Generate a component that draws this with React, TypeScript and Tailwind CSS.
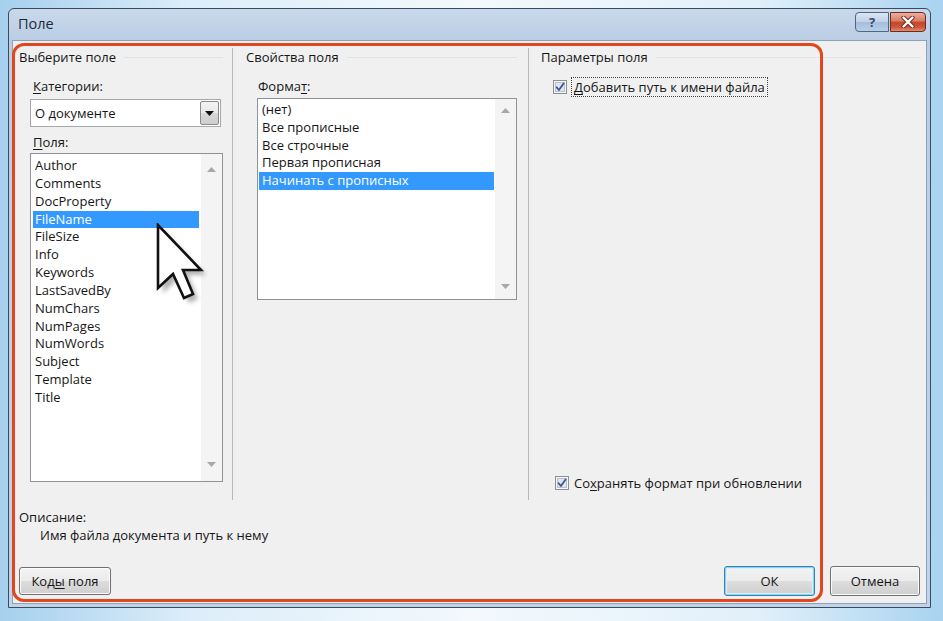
import React from "react";

const fields = [
  "Author",
  "Comments",
  "DocProperty",
  "FileName",
  "FileSize",
  "Info",
  "Keywords",
  "LastSavedBy",
  "NumChars",
  "NumPages",
  "NumWords",
  "Subject",
  "Template",
  "Title",
];

const formats = [
  "(нет)",
  "Все прописные",
  "Все строчные",
  "Первая прописная",
  "Начинать с прописных",
];

function ArrowUp() {
  return (
    <svg width="9" height="5" viewBox="0 0 9 5">
      <path d="M0 5 L4.5 0 L9 5 Z" fill="#a8a8a8" />
    </svg>
  );
}

function ArrowDown() {
  return (
    <svg width="9" height="5" viewBox="0 0 9 5">
      <path d="M0 0 L4.5 5 L9 0 Z" fill="#a8a8a8" />
    </svg>
  );
}

function CheckBox() {
  return (
    <svg width="14" height="14" viewBox="0 0 14 14" className="shrink-0">
      <rect x="0.5" y="0.5" width="13" height="13" fill="#f6f6f6" stroke="#8e8f8f" />
      <rect x="2.5" y="2.5" width="9" height="9" fill="#dfe5ee" stroke="#b9c1cc" />
      <path d="M3.6 7.2 L5.9 10 L10.6 3.4" fill="none" stroke="#3c5598" strokeWidth="1.8" strokeLinecap="round" strokeLinejoin="round" />
    </svg>
  );
}

function Cursor() {
  return (
    <svg width="60" height="90" viewBox="0 0 60 90">
      <defs>
        <filter id="cshadow" x="-30%" y="-30%" width="160%" height="160%">
          <feGaussianBlur stdDeviation="2" />
        </filter>
      </defs>
      <g transform="translate(7 7)" filter="url(#cshadow)" opacity="0.45">
        <path d="M0 0 L0 63 L15 49 L26 73 L35 69 L25 45 L43 45 Z" fill="#555" />
      </g>
      <g transform="translate(2 2)">
        <path
          d="M0 0 L0 63 L15 49 L26 73 L35 69 L25 45 L43 45 Z"
          fill="#ffffff"
          stroke="#111"
          strokeWidth="2.6"
          strokeLinejoin="miter"
        />
      </g>
    </svg>
  );
}

export default function App() {
  return (
    <div className="relative w-[943px] h-[621px] overflow-hidden bg-[linear-gradient(90deg,#a6d0ee_0%,#dcedf9_20%,#f3f9fd_50%,#e2f0fa_80%,#a9d3f0_100%)] pt-[8px] pl-[8px] font-['Open_Sans','Noto_Sans',sans-serif] text-[#161616]">
      <div className="w-[923px] h-[600px] border border-[#3b4a5e] rounded-t-[6px] bg-[linear-gradient(180deg,#c9d9eb_0px,#b9cde4_32px,#c0d3e8_100%)] flex flex-col">
        {/* title bar */}
        <div className="h-[31px] flex items-start justify-between">
          <div className="pl-[9px] pt-[5px] text-[14.5px] leading-[19px] text-[#1b2a3c]">Поле</div>
          <div className="flex mt-[3px] mr-[4px] gap-[1px]">
            <div className="w-[34px] h-[20px] rounded-l-[4px] border border-[#4f6584] bg-[linear-gradient(180deg,#dbe6f3_0%,#c0d2e8_48%,#a6bedc_52%,#b9cfe8_100%)] flex items-center justify-center text-[13px] font-bold leading-none text-[#3a4b62]">
              ?
            </div>
            <div className="w-[36px] h-[20px] rounded-r-[4px] border border-[#6b2a22] bg-[linear-gradient(180deg,#eab0a2_0%,#d97a62_45%,#c4452b_52%,#d0583a_80%,#e38d70_100%)] flex items-center justify-center">
              <svg width="14" height="12" viewBox="0 0 14 12">
                <path d="M2.5 1.5 L11.5 10.5 M11.5 1.5 L2.5 10.5" stroke="#6b2a22" strokeWidth="4.2" strokeLinecap="round" />
                <path d="M2.5 1.5 L11.5 10.5 M11.5 1.5 L2.5 10.5" stroke="#ffffff" strokeWidth="2.4" strokeLinecap="round" />
              </svg>
            </div>
          </div>
        </div>

        {/* client area */}
        <div className="mx-[3px] h-[564px] border border-[#8ca1bb] bg-[#f0f0f0] flex flex-col text-[13px]">
          <div className="mt-[7px] h-[452px] flex">
            {/* column 1 */}
            <div className="w-[220px] h-full border-r border-[#b8b8b8] pl-[6px] flex flex-col">
              <div className="h-[18px] flex items-center">
                <span className="leading-[18px] whitespace-nowrap">Выберите поле</span>
                <div className="flex-1 h-px bg-[#dde3e8] ml-[8px] mr-[9px]" />
              </div>
              <div className="mt-[11px] pl-[14px] leading-[18px]">
                <u className="underline-offset-2">К</u>атегории:
              </div>
              <div className="mt-[4px] ml-[11px] w-[191px] h-[28px] border border-[#a4a9b0] bg-white flex items-center">
                <span className="flex-1 pl-[4px] leading-[18px]">О документе</span>
                <div className="w-[19px] h-[24px] mr-[1px] border border-[#8a8a8a] rounded-[2px] bg-[linear-gradient(180deg,#f4f4f4_0%,#e9e9e9_50%,#d9d9d9_50%,#cdcdcd_100%)] flex items-center justify-center">
                  <svg width="9" height="5" viewBox="0 0 9 5">
                    <path d="M0 0 L4.5 5 L9 0 Z" fill="#111" />
                  </svg>
                </div>
              </div>
              <div className="mt-[6px] pl-[14px] leading-[18px]">
                <u className="underline-offset-2">П</u>оля:
              </div>
              <div className="mt-[2px] ml-[11px] w-[193px] h-[329px] border border-[#8e9399] bg-white flex">
                <div className="flex-1 pt-[3px] pl-[2px] pr-[2px]">
                  {fields.map((f) => (
                    <div
                      key={f}
                      className={
                        f === "FileName"
                          ? "h-[17.85px] leading-[17.85px] pl-[2px] bg-[#3399ff] text-white"
                          : "h-[17.85px] leading-[17.85px] pl-[2px]"
                      }
                    >
                      {f}
                    </div>
                  ))}
                </div>
                <div className="w-[21px] h-full bg-[#f4f4f4] flex flex-col items-center justify-between pt-[13px] pb-[14px]">
                  <ArrowUp />
                  <ArrowDown />
                </div>
              </div>
            </div>

            {/* column 2 */}
            <div className="w-[296px] h-full border-r border-[#b8b8b8] pl-[13px] flex flex-col">
              <div className="h-[18px] flex items-center">
                <span className="leading-[18px] whitespace-nowrap">Свойства поля</span>
                <div className="flex-1 h-px bg-[#dde3e8] ml-[8px] mr-[11px]" />
              </div>
              <div className="mt-[11px] pl-[12px] leading-[18px]">
                Форма<u className="underline-offset-2">т</u>:
              </div>
              <div className="mt-[3px] ml-[11px] w-[260px] h-[202px] border border-[#8e9399] bg-white flex">
                <div className="flex-1 pt-[2px] pl-[1px] pr-[1px]">
                  {formats.map((f) => (
                    <div
                      key={f}
                      className={
                        f === "Начинать с прописных"
                          ? "h-[17.75px] leading-[17.75px] pl-[3px] bg-[#3399ff] text-white"
                          : "h-[17.75px] leading-[17.75px] pl-[3px]"
                      }
                    >
                      {f}
                    </div>
                  ))}
                </div>
                <div className="w-[21px] h-full bg-[#f4f4f4] flex flex-col items-center justify-between pt-[9px] pb-[10px]">
                  <ArrowUp />
                  <ArrowDown />
                </div>
              </div>
            </div>

            {/* column 3 */}
            <div className="flex-1 h-full pl-[12px] flex flex-col">
              <div className="h-[18px] flex items-center">
                <span className="leading-[18px] whitespace-nowrap">Параметры поля</span>
                <div className="flex-1 h-px bg-[#dde3e8] ml-[8px] mr-[5px]" />
              </div>
              <div className="mt-[11px] ml-[12px] h-[20px] flex items-center">
                <CheckBox />
                <div className="ml-[4px] h-[20px] px-[2px] border border-dotted border-[#444] flex items-center leading-[18px] whitespace-nowrap">
                  <u className="underline-offset-2">Д</u>обавить путь к имени файла
                </div>
              </div>
              <div className="flex-1" />
              <div className="mb-[8px] ml-[14px] h-[18px] flex items-center">
                <CheckBox />
                <span className="ml-[5px] leading-[18px] whitespace-nowrap">
                  Со<u className="underline-offset-2">х</u>ранять формат при обновлении
                </span>
              </div>
            </div>
          </div>

          {/* description */}
          <div className="mt-[8px] pl-[6px] leading-[18px]">Описание:</div>
          <div className="pl-[27px] leading-[18px]">Имя файла документа и путь к нему</div>

          {/* buttons */}
          <div className="mt-[22px] pl-[6px] pr-[6px] flex items-center">
            <div className="w-[92px] h-[28px] rounded-[3px] border border-[#707070] bg-[linear-gradient(180deg,#f3f3f3_0%,#ebebeb_50%,#dddddd_50%,#cfcfcf_100%)] shadow-[inset_0_0_0_1px_#fbfbfb] flex items-center justify-center leading-[18px]">
              Код<u className="underline-offset-2">ы</u>&nbsp;поля
            </div>
            <div className="ml-auto w-[91px] h-[30px] rounded-[3px] border border-[#3c7fb1] bg-[linear-gradient(180deg,#f3f3f3_0%,#ebebeb_50%,#dddddd_50%,#cfcfcf_100%)] shadow-[inset_0_0_0_1px_#7fd6f8,inset_0_0_0_2px_#d8f1fb] flex items-center justify-center leading-[18px]">
              ОК
            </div>
            <div className="ml-[15px] w-[90px] h-[30px] rounded-[3px] border border-[#707070] bg-[linear-gradient(180deg,#f3f3f3_0%,#ebebeb_50%,#dddddd_50%,#cfcfcf_100%)] shadow-[inset_0_0_0_1px_#fbfbfb] flex items-center justify-center leading-[18px]">
              Отмена
            </div>
          </div>
        </div>
      </div>

      {/* red annotation frame */}
      <div className="absolute left-[12px] top-[43px] w-[811px] h-[559px] border-[3px] border-[#e2461f] rounded-[12px] pointer-events-none" />

      {/* mouse cursor */}
      <div className="absolute left-[156px] top-[223px] pointer-events-none">
        <Cursor />
      </div>
    </div>
  );
}
